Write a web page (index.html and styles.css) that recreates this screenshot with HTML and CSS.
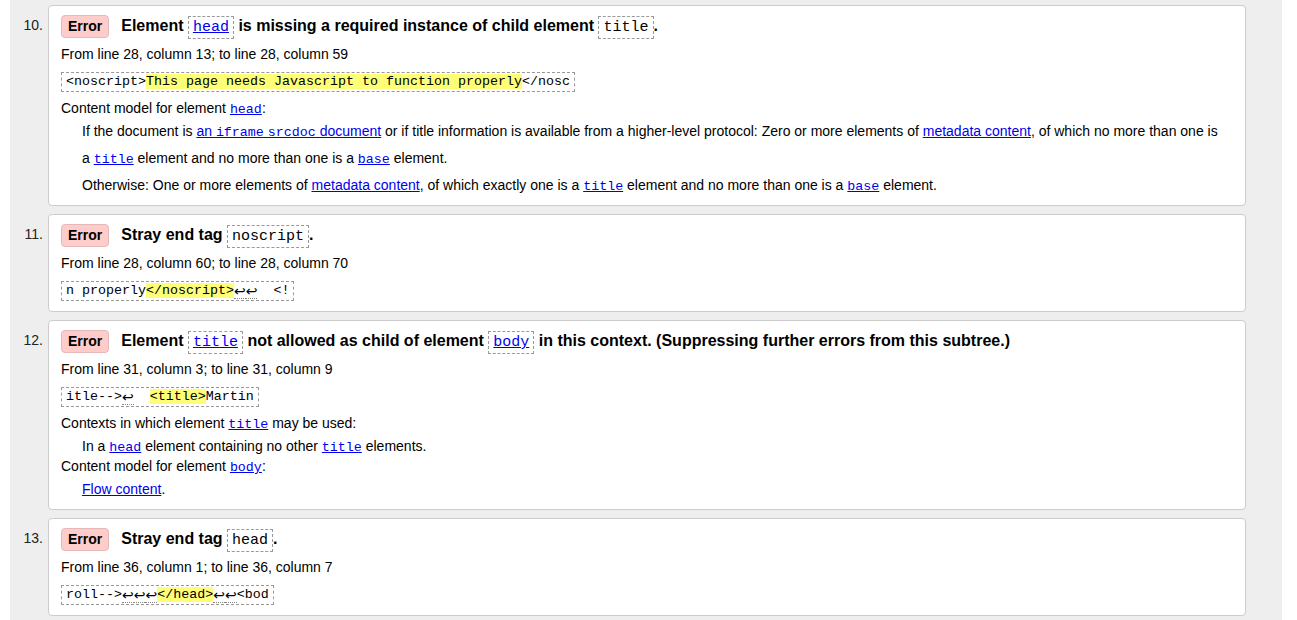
FILE: index.html
```html
<!DOCTYPE html>
<html lang="en">
<head>
<meta charset="utf-8">
<title>Validation results</title>
<link rel="stylesheet" href="styles.css">
</head>
<body>
<div class="results">
  <ol class="messages">
    <li class="msg">
      <span class="num">10.</span>
      <div class="card">
        <p class="head"><strong class="badge">Error</strong><span class="title">Element <code><a href="#">head</a></code> is missing a required instance of child element <code>title</code>.</span></p>
        <p class="loc">From line 28, column 13; to line 28, column 59</p>
        <p class="extract"><code>&lt;noscript&gt;<b class="hl">This page needs Javascript to function properly</b>&lt;/nosc</code></p>
        <dl class="info tall">
          <dt>Content model for element <a href="#"><code>head</code></a>:</dt>
          <dd>If the document is <a href="#">an <code>iframe</code> <code>srcdoc</code> document</a> or if title information is available from a higher-level protocol: Zero or more elements of <a href="#">metadata content</a>, of which no more than one is a <a href="#"><code>title</code></a> element and no more than one is a <a href="#"><code>base</code></a> element.</dd>
          <dd class="cont">Otherwise: One or more elements of <a href="#">metadata content</a>, of which exactly one is a <a href="#"><code>title</code></a> element and no more than one is a <a href="#"><code>base</code></a> element.</dd>
        </dl>
      </div>
    </li>
    <li class="msg">
      <span class="num">11.</span>
      <div class="card">
        <p class="head"><strong class="badge">Error</strong><span class="title">Stray end tag <code>noscript</code>.</span></p>
        <p class="loc">From line 28, column 60; to line 28, column 70</p>
        <p class="extract"><code>n properly<b class="hl">&lt;/noscript&gt;</b><span class="lf">↩</span><span class="lf">↩</span>&nbsp;&nbsp;&lt;!</code></p>
      </div>
    </li>
    <li class="msg">
      <span class="num">12.</span>
      <div class="card">
        <p class="head"><strong class="badge">Error</strong><span class="title">Element <code><a href="#">title</a></code> not allowed as child of element <code><a href="#">body</a></code> in this context. (Suppressing further errors from this subtree.)</span></p>
        <p class="loc">From line 31, column 3; to line 31, column 9</p>
        <p class="extract"><code>itle--&gt;<span class="lf">↩</span>&nbsp;&nbsp;<b class="hl">&lt;title&gt;</b>Martin</code></p>
        <dl class="info">
          <dt>Contexts in which element <a href="#"><code>title</code></a> may be used:</dt>
          <dd>In a <a href="#"><code>head</code></a> element containing no other <a href="#"><code>title</code></a> elements.</dd>
          <dt>Content model for element <a href="#"><code>body</code></a>:</dt>
          <dd><a href="#">Flow content</a>.</dd>
        </dl>
      </div>
    </li>
    <li class="msg">
      <span class="num">13.</span>
      <div class="card">
        <p class="head"><strong class="badge">Error</strong><span class="title">Stray end tag <code>head</code>.</span></p>
        <p class="loc">From line 36, column 1; to line 36, column 7</p>
        <p class="extract"><code>roll--&gt;<span class="lf">↩</span><span class="lf">↩</span><span class="lf">↩</span><b class="hl">&lt;/head&gt;</b><span class="lf">↩</span><span class="lf">↩</span>&lt;bod</code></p>
      </div>
    </li>
  </ol>
</div>
</body>
</html>
```
FILE: styles.css
```css
html, body {
  margin: 0;
  padding: 0;
  background: #fff;
}

body {
  font-family: "Liberation Sans", Arial, sans-serif;
  font-size: 14px;
  color: #000;
}

.results {
  margin: 0 15px 0 10px;
  background: #eee;
  padding: 5px 36px 20px 0;
  min-height: 615px;
}

.messages {
  list-style: none;
  margin: 0;
  padding: 0;
}

.msg {
  display: grid;
  grid-template-columns: 38px 1fr;
  margin-bottom: 8px;
}

.num {
  text-align: right;
  padding-right: 5px;
  padding-top: 10px;
  line-height: 20px;
  color: #222;
}

.card {
  background: #fff;
  border: 1px solid #ccc;
  border-radius: 4px;
  padding: 8px 12px 10px;
}

.card p {
  margin: 0;
}

.head {
  display: flex;
  align-items: center;
  gap: 12px;
  line-height: 24px;
}

.badge {
  display: inline-block;
  font-size: 14px;
  font-weight: bold;
  line-height: 21px;
  padding: 0 6px;
  background: #fcc;
  border: 1px solid #e6b8b8;
  border-radius: 4px;
}

.title {
  font-size: 16px;
  font-weight: bold;
}

code {
  font-family: "Liberation Mono", "DejaVu Sans Mono", monospace;
}

.title code {
  font-weight: normal;
  font-size: 15px;
  line-height: 17px;
  padding: 2px 4px;
  border: 1px dashed #999;
  display: inline-block;
}

a {
  color: #00e;
  text-decoration: underline;
}

.loc {
  margin-top: 5px !important;
  line-height: 20px;
}

.extract {
  display: flex;
  margin-top: 8px !important;
}

.extract code {
  display: block;
  font-size: 13.33px;
  line-height: 14px;
  height: 14px;
  padding: 2px 4px;
  border: 1px dashed #999;
  white-space: pre;
  overflow: visible;
}

.hl {
  font-weight: normal;
  background: #ff7;
}

.lf {
  display: inline-block;
  vertical-align: top;
  height: 14px;
  font-family: "DejaVu Sans", sans-serif;
  font-size: 14px;
  line-height: 14px;
  border-bottom: 1px dotted #888;
}

.info {
  margin: 6px 0 0;
}

.info dt {
  line-height: 20px;
}

.info dd {
  margin: 3px 0 0 21px;
  line-height: 20px;
}

.info code {
  font-size: 13.33px;
  line-height: 14px;
}

.info.tall dd {
  line-height: 27px;
  margin: 0 8px 0 21px;
}

.info.tall {
  margin-bottom: -4px;
}
```
